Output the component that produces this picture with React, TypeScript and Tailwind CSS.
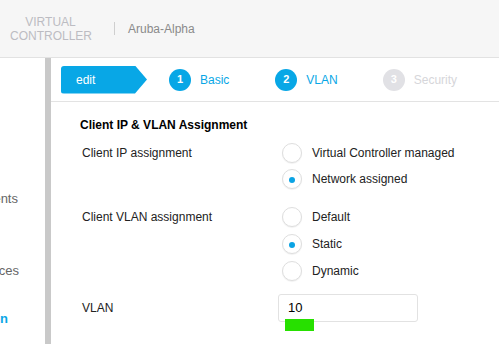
import React from "react";

const BLUE = "#08a7e6";

function Radio({ checked, label, h }: { checked?: boolean; label: string; h?: string }) {
  return (
    <div className={h === "a" ? "flex h-[26px] items-center" : "flex h-[27px] items-center"}>
      <div className="flex h-[20px] w-[20px] items-center justify-center rounded-full border border-[#dedede] bg-white shadow-[0_1px_1px_rgba(0,0,0,0.06)]">
        {checked && <div className="mt-[2px] h-[6px] w-[6px] rounded-full bg-[#0aa3e4]" />}
      </div>
      <span className="ml-[10px] text-[12px] text-[#222]">{label}</span>
    </div>
  );
}

function Step({ n, label, active }: { n: number; label: string; active: boolean }) {
  return (
    <div className="flex items-center">
      <div
        className={
          active
            ? "flex h-[22px] w-[22px] items-center justify-center rounded-full bg-[#08a7e6] text-[11px] font-bold text-white"
            : "flex h-[22px] w-[22px] items-center justify-center rounded-full bg-[#e1e1e5] text-[11px] font-bold text-white"
        }
      >
        {n}
      </div>
      <span className={active ? "ml-[9px] text-[12px] text-[#08a7e6]" : "ml-[9px] text-[12px] text-[#d6d6da]"}>
        {label}
      </span>
    </div>
  );
}

export default function App() {
  return (
    <div
      className="flex h-[344px] w-[499px] flex-col overflow-hidden bg-white"
      style={{ fontFamily: '"Liberation Sans", Arial, sans-serif' }}
    >
      {/* Header */}
      <div className="flex h-[58px] shrink-0 items-center border-b border-[#e2e2e2] bg-[#f6f6f6]">
        <div className="ml-[10px] w-[81px] text-center text-[12px] leading-[14px] text-[#bcbcc2]">
          <div>VIRTUAL</div>
          <div>CONTROLLER</div>
        </div>
        <div className="ml-[23px] h-[13px] w-px bg-[#cfcfcf]" />
        <div className="ml-[13px] text-[12px] text-[#8a8a8a]">Aruba-Alpha</div>
      </div>

      <div className="flex min-h-0 flex-1">
        {/* Sidebar */}
        <div className="relative w-[45px] shrink-0 overflow-hidden bg-white text-[13px] text-[#666]">
          <div className="absolute right-[27px] top-[131px] whitespace-nowrap">Clients</div>
          <div className="absolute right-[26px] top-[203px] whitespace-nowrap">Devices</div>
          <div className="absolute right-[37px] top-[251px] whitespace-nowrap font-bold text-[#08a7e6]">Configuration</div>
        </div>
        <div className="w-[6px] shrink-0 bg-[#c9c9c9]" />

        {/* Main */}
        <div className="flex min-w-0 flex-1 flex-col">
          <div className="flex h-[44px] shrink-0 items-center border-b border-[#e3e3e3] pl-[10px]">
            <div
              className="flex h-[28px] w-[86px] items-center rounded-l-[3px] pl-[15px] text-[12px] text-white [clip-path:polygon(0_0,74px_0,86px_50%,74px_100%,0_100%)]"
              style={{ backgroundColor: BLUE }}
            >
              edit
            </div>
            <div className="ml-[22px]">
              <Step n={1} label="Basic" active />
            </div>
            <div className="ml-[46px]">
              <Step n={2} label="VLAN" active />
            </div>
            <div className="ml-[45px]">
              <Step n={3} label="Security" active={false} />
            </div>
          </div>

          <div className="flex flex-col pl-[29px] pt-[15px]">
            <div className="text-[12px] font-bold leading-[16px] text-black">Client IP &amp; VLAN Assignment</div>

            <div className="mt-[7px] flex">
              <div className="flex h-[26px] w-[202px] items-center pl-[2px] text-[12px] text-[#222]">
                Client IP assignment
              </div>
              <div className="flex flex-col">
                <Radio label="Virtual Controller managed" h="a" />
                <Radio label="Network assigned" checked h="a" />
              </div>
            </div>

            <div className="mt-[11px] flex">
              <div className="flex h-[27px] w-[202px] items-center pl-[2px] text-[12px] text-[#222]">
                Client VLAN assignment
              </div>
              <div className="flex flex-col">
                <Radio label="Default" />
                <Radio label="Static" checked />
                <Radio label="Dynamic" />
              </div>
            </div>

            <div className="mt-[10px] flex items-center">
              <div className="w-[198px] pl-[2px] text-[12px] text-[#222]">VLAN</div>
              <div className="relative">
                <div className="flex h-[28px] w-[140px] items-center rounded-[3px] border border-[#e2e2e2] bg-white pl-[9px] text-[13px] text-black">
                  10
                </div>
                <div className="absolute left-[7px] top-[25px] h-[12px] w-[29px] bg-[#27e000]" />
              </div>
            </div>
          </div>
        </div>
      </div>
    </div>
  );
}
